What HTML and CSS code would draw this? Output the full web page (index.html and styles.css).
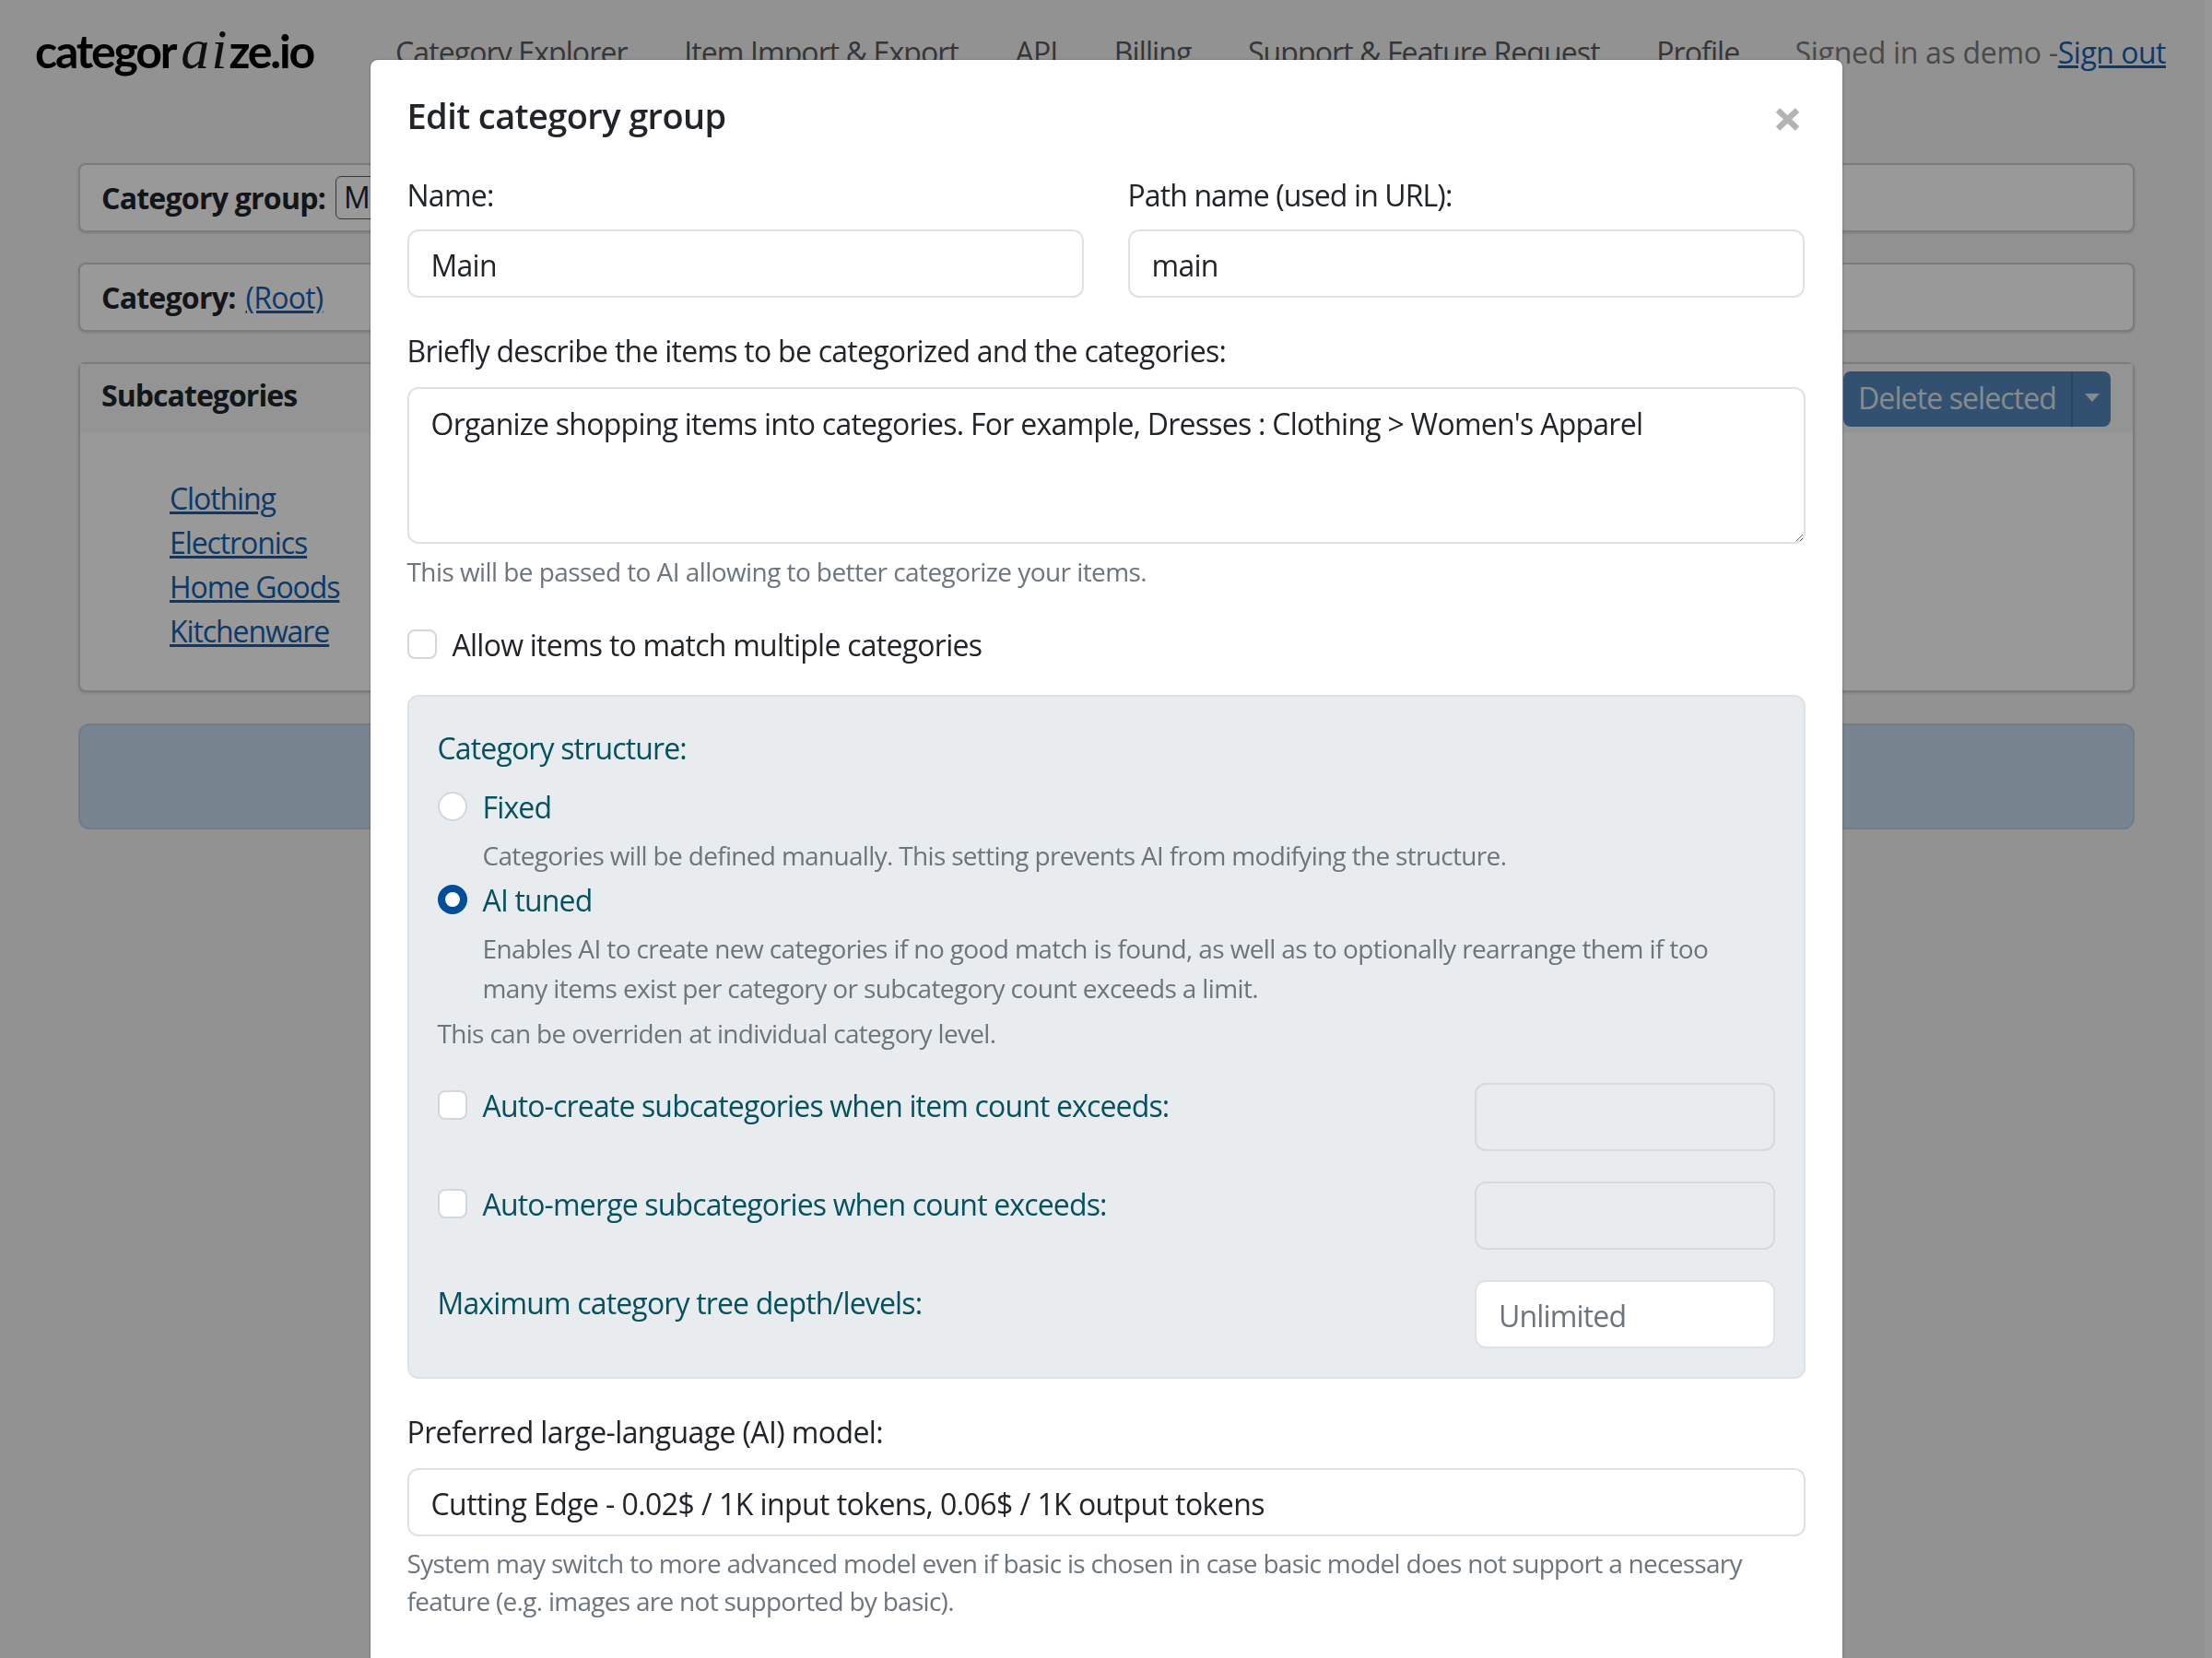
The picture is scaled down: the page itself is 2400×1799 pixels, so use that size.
FILE: index.html
```html
<!DOCTYPE html>
<html lang="en">
<head>
<meta charset="utf-8">
<title>Edit category group</title>
<link rel="stylesheet" href="styles.css">
</head>
<body>
<header class="topbar">
  <div class="logo">categor<span class="logo-ai">ai</span>ze.io</div>
  <nav class="nav">
    <a class="nav-link">Category Explorer</a>
    <a class="nav-link">Item Import &amp; Export</a>
    <a class="nav-link">API</a>
    <a class="nav-link">Billing</a>
    <a class="nav-link">Support &amp; Feature Request</a>
    <a class="nav-link">Profile</a>
  </nav>
  <div class="signed">Signed in as demo -<a class="link sign-out" href="#">Sign out</a></div>
</header>
<main class="page">
  <section class="card card-row"><b>Category group:</b><span class="group-select">Main</span></section>
  <section class="card card-row"><b>Category:</b><a class="link" href="#">(Root)</a></section>
  <section class="card card-sub">
    <div class="card-head">
      <b class="head-title">Subcategories</b>
      <div class="btn-group"><span class="btn-main">Delete selected</span><span class="btn-caret"><i class="caret"></i></span></div>
    </div>
    <ul class="sub-list">
      <li><a class="link" href="#">Clothing</a></li>
      <li><a class="link" href="#">Electronics</a></li>
      <li><a class="link" href="#">Home Goods</a></li>
      <li><a class="link" href="#">Kitchenware</a></li>
    </ul>
  </section>
  <section class="notice"></section>
</main>
<div class="backdrop"></div>
<div class="scroll-track"></div>
<div class="modal">
  <div class="modal-head">
    <h2 class="modal-title">Edit category group</h2>
    <svg class="close" viewBox="0 0 27 25" width="27" height="25"><path d="M3 2.5 24 22.5M24 2.5 3 22.5" stroke="#b3b3b3" stroke-width="6.5" fill="none"/></svg>
  </div>
  <div class="two-col">
    <div>
      <label class="label label-first">Name:</label>
      <input class="field" value="Main">
    </div>
    <div>
      <label class="label label-first label-path">Path name (used in URL):</label>
      <input class="field" value="main">
    </div>
  </div>
  <label class="label label-block">Briefly describe the items to be categorized and the categories:</label>
  <textarea class="field area">Organize shopping items into categories. For example, Dresses : Clothing &gt; Women's Apparel</textarea>
  <p class="help help-top">This will be passed to AI allowing to better categorize your items.</p>
  <div class="check-row check-allow"><span class="box"></span><span>Allow items to match multiple categories</span></div>
  <div class="panel">
    <div class="panel-title">Category structure:</div>
    <div class="check-row radio-fixed"><span class="box round"></span><span>Fixed</span></div>
    <p class="help indent desc-fixed">Categories will be defined manually. This setting prevents AI from modifying the structure.</p>
    <div class="check-row radio-ai"><span class="box round on"></span><span>AI tuned</span></div>
    <p class="help indent desc-ai">Enables AI to create new categories if no good match is found, as well as to optionally rearrange them if too many items exist per category or subcategory count exceeds a limit.</p>
    <p class="help override">This can be overriden at individual category level.</p>
    <div class="limits">
      <div class="check-row limit-label"><span class="box"></span><span>Auto-create subcategories when item count exceeds:</span></div>
      <input class="field limit-field" disabled>
      <div class="check-row limit-label"><span class="box"></span><span>Auto-merge subcategories when count exceeds:</span></div>
      <input class="field limit-field" disabled>
      <div class="limit-label">Maximum category tree depth/levels:</div>
      <input class="field limit-field" placeholder="Unlimited">
    </div>
  </div>
  <label class="label label-block label-model">Preferred large-language (AI) model:</label>
  <select class="field pick"><option>Cutting Edge - 0.02$ / 1K input tokens, 0.06$ / 1K output tokens</option></select>
  <p class="help help-model">System may switch to more advanced model even if basic is chosen in case basic model does not support a necessary feature (e.g. images are not supported by basic).</p>
</div>
</body>
</html>
```
FILE: styles.css
```css
* { box-sizing: border-box; }
html, body { margin: 0; height: 100%; overflow: hidden; }
body {
  background: #f3f3f3;
  color: #212529;
  font: 400 32px/48px "Open Sans", "Noto Sans", sans-serif;
  font-stretch: 92%;
  letter-spacing: -0.75px;
}
a { color: inherit; }
.link { color: #145fb0; text-decoration: underline; }

.topbar { display: flex; align-items: flex-start; height: 177px; padding: 33px 50px 0 38px; }
.logo {
  width: 391px; margin-top: -8px; white-space: nowrap;
  font: 700 50px/56px "Lato", sans-serif; letter-spacing: -2.2px; color: #000;
  filter: blur(.6px);
}
.logo-ai { font: italic 400 62px/56px "Liberation Serif", serif; letter-spacing: 2px; padding: 0 0 0 6px; color: #1a1a1a; }
.nav { display: flex; gap: 61.5px; color: #5a5a5a; letter-spacing: -0.9px; }
.signed { margin-left: auto; color: #7c7c7c; letter-spacing: -0.3px; }
.sign-out { letter-spacing: -0.5px; }

.page { display: flex; flex-direction: column; gap: 33.5px; padding: 0 84px 0 85px; }
.card { background: #fff; border: 2px solid #cfcfcf; border-radius: 8px; box-shadow: 0 1px 3px rgba(0,0,0,.16); }
.card-row { display: flex; align-items: center; gap: 11px; height: 74.5px; padding: 2px 23px 0; }
.group-select { display: block; flex: none; margin-top: -2px; border: 1.5px solid #5f5f5f; border-radius: 6px; height: 47px; padding: 0 8px; line-height: 44px; }
.card-sub { height: 358px; }
.card-head { display: flex; justify-content: space-between; align-items: center; height: 75px; padding: 0 24px 0 23px; background: #f7f7f7; }
.head-title { margin-bottom: 7px; letter-spacing: -0.95px; }
.btn-group { display: flex; height: 60px; background: #5488bb; border-radius: 8px; }
.btn-main { padding: 0 16px; line-height: 58px; color: #e2e6ec; letter-spacing: -0.9px; border-right: 2px solid #3f74a9; }
.btn-caret { display: flex; justify-content: center; padding-top: 24px; width: 41px; }
.caret { width: 0; height: 0; border: solid transparent; border-width: 9px 8px 0; border-top-color: #e2e6ec; }
.sub-list { list-style: none; margin: 46.5px 0 0; padding: 0 0 0 97px; letter-spacing: -1.1px; }
.notice { height: 115px; background: #c8dcf0; border: 2px solid #b9cfe6; border-radius: 12px; }

.backdrop { position: fixed; inset: 0; background: rgba(0,0,0,.4); }
.scroll-track { position: fixed; top: 0; right: 0; bottom: 0; width: 8px; background: rgba(255,255,255,.06); }

.modal {
  position: fixed; top: 65px; left: 401.5px; bottom: 0; width: 1597.5px;
  padding: 0 40px; background: #fff; border-radius: 8px 8px 0 0; overflow: hidden;
  box-shadow: 0 0 2px rgba(0,0,0,.5);
}
.modal-head { display: flex; justify-content: space-between; align-items: flex-start; padding-top: 30px; }
.modal-title { margin: 0; font-size: 38px; line-height: 60px; font-weight: 600; letter-spacing: -0.6px; }
.close { margin: 22px 6px 0 0; }
.two-col { display: grid; grid-template-columns: 734px 734px; gap: 48px; }
.label { display: block; margin-bottom: 13px; }
.label-first { margin-top: 33px; }
.label-path { letter-spacing: -0.9px; }
.label-block { margin-top: 34px; margin-bottom: 15px; }
.label-model { letter-spacing: -0.62px; }
.field {
  display: block; width: 100%; height: 74px; padding: 13px 24px 11px;
  background: #fff; border: 2px solid #dee2e6; border-radius: 12px;
  color: #212529; font: inherit; letter-spacing: inherit; outline: none;
}
.field::placeholder { color: #6c757d; opacity: 1; }
.area { height: 170px; padding: 14px 24px 10px; resize: vertical; overflow: hidden; }
.pick { appearance: none; letter-spacing: -0.57px; }
.help { margin: 0; font-size: 28px; line-height: 43px; color: #6c757d; letter-spacing: -0.68px; }
.help-top { margin-top: 9px; padding-bottom: 1px; letter-spacing: -0.57px; }
.help-model { margin-top: 9px; line-height: 41px; letter-spacing: -0.72px; }
.check-row { display: flex; align-items: center; gap: 17px; }
.check-allow { margin-top: 33px; }
.box { flex: none; width: 32px; height: 32px; margin-top: -3px; background: #fff; border: 2px solid #d4d7da; border-radius: 8px; }
.round { border-radius: 50%; }
.on { border: 8.5px solid #004e9a; }
.panel { margin-top: 30px; padding: 32px 31px 31px; background: #e9ecef; border: 2px solid #dee2e6; border-radius: 12px; color: #055160; letter-spacing: -0.85px; }
.radio-fixed { margin-top: 16px; }
.indent { padding-left: 49px; }
.desc-fixed { margin-top: 7px; padding-bottom: 1px; }
.radio-ai { margin-top: 2px; }
.desc-ai { margin-top: 7px; padding-right: 40px; padding-bottom: 1px; letter-spacing: -0.62px; }
.override { margin-top: 5px; padding-bottom: 1px; }
.limits { display: grid; grid-template-columns: 1fr 326px; row-gap: 33px; margin-top: 31px; }
.limit-label { align-self: start; padding-top: 1px; }
.limit-field:disabled { background: #e9ecef; border-color: #d6d9dd; }
```
